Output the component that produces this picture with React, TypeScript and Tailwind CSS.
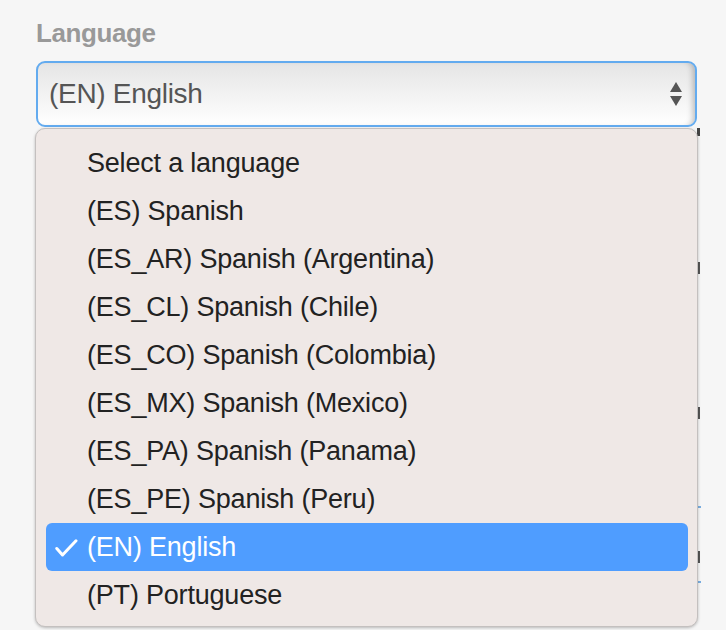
import React from "react";

const items = [
  "Select a language",
  "(ES) Spanish",
  "(ES_AR) Spanish (Argentina)",
  "(ES_CL) Spanish (Chile)",
  "(ES_CO) Spanish (Colombia)",
  "(ES_MX) Spanish (Mexico)",
  "(ES_PA) Spanish (Panama)",
  "(ES_PE) Spanish (Peru)",
  "(EN) English",
  "(PT) Portuguese",
];

export default function App() {
  return (
    <div className="relative w-[726px] h-[630px] overflow-hidden bg-[#f6f6f6] font-['Helvetica','Liberation_Sans',Arial,sans-serif]">
      <div className="pt-[18px] pl-[36px] pr-[29px]">
        <div className="text-[26px] leading-[30px] font-bold text-[#999999] tracking-[-0.4px]">Language</div>
        <div className="relative mt-[13px] h-[66px] rounded-[9px] border-2 border-[#63abef] bg-gradient-to-b from-[#e5e5e5] to-[#ffffff] flex items-center justify-between pl-[11px] pr-[13px] shadow-[inset_-6px_0_6px_-4px_rgba(0,0,0,0.25)]">
          <span className="text-[28px] text-[#555555] tracking-[-0.3px]">(EN) English</span>
          <svg width="12" height="25" viewBox="0 0 12 25">
            <polygon points="6,0 12,10 0,10" fill="#555555" />
            <polygon points="0,14 12,14 6,24" fill="#555555" />
          </svg>
        </div>
      </div>

      {/* glimpses of the page behind the menu */}
      <div className="absolute left-[697px] top-[128px] w-[4px] flex flex-col">
        <div className="w-[3px] h-[8px] bg-[#444444]" />
        <div className="mt-[126px] w-[3px] h-[12px] bg-[#555555]" />
        <div className="mt-[133px] w-[3px] h-[12px] bg-[#555555]" />
        <div className="mt-[87px] w-[4px] h-[2px] bg-[#7aaee0]" />
        <div className="mt-[43px] w-[3px] h-[12px] bg-[#555555]" />
        <div className="mt-[18px] w-[4px] h-[2px] bg-[#7aaee0]" />
      </div>

      <div className="absolute left-[35px] top-[128px] w-[663px] h-[499px] rounded-[10px] border border-[#c4c0bf] bg-[#efe8e6] shadow-[0_1px_3px_rgba(0,0,0,0.25)] pt-[10px] pl-[10px] pr-[9px] flex flex-col">
        {items.map((it) => {
          const sel = it === "(EN) English";
          return (
            <div
              key={it}
              className={
                sel
                  ? "relative h-[48px] rounded-[6px] bg-[#4f9dff] text-white flex items-center pl-[41px]"
                  : "relative h-[48px] flex items-center pl-[41px] text-[#222222]"
              }
            >
              {sel && (
                <svg className="absolute left-[9px] top-[16px]" width="23" height="18" viewBox="0 0 23 18">
                  <path d="M1.8 9.5 L7.5 16 L21 1.8" fill="none" stroke="#ffffff" strokeWidth="3" strokeLinecap="round" strokeLinejoin="round" />
                </svg>
              )}
              <span className="text-[27px] leading-[48px] tracking-[-0.2px]">{it}</span>
            </div>
          );
        })}
      </div>
    </div>
  );
}
